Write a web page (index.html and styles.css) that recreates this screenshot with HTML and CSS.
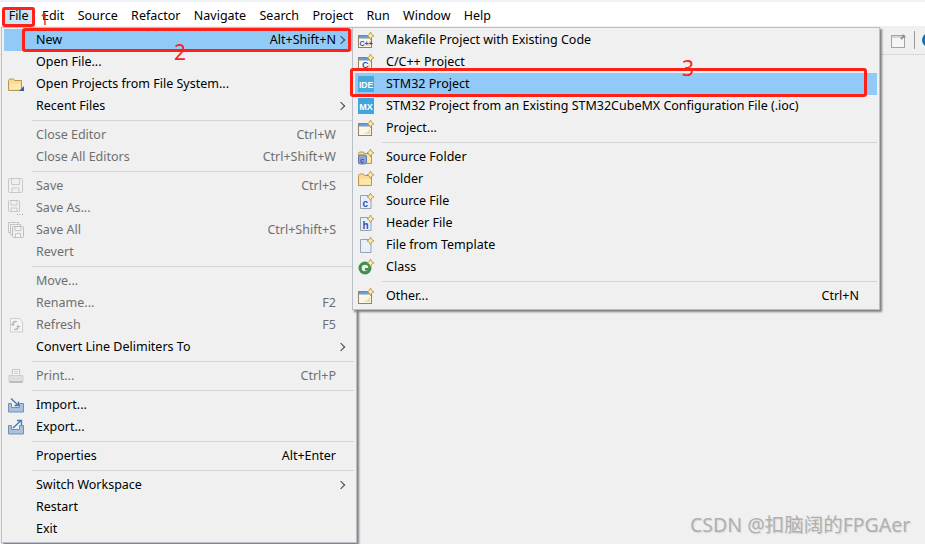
FILE: index.html
```html
<!DOCTYPE html>
<html lang="en">
<head>
  <meta charset="UTF-8" />
  <title>STM32CubeIDE - File menu</title>
  <link rel="stylesheet" href="styles.css">
</head>
<body>

<svg class="defs" width="0" height="0" aria-hidden="true">
  <symbol id="star" viewBox="0 0 16 16">
    <path d="M12.500 0l1.200 2.600 2.300 1.200-2.300 1.300-1.200 2.600-1.200-2.600L9 3.800l2.300-1.200z" fill="#fdeeb0" stroke="#b58f3a" stroke-width=".8"/>
  </symbol>
  <symbol id="win" viewBox="0 0 16 16">
    <rect x=".5" y="3.500" width="13" height="12" fill="#fbf7e6" stroke="#8d8468"/>
    <rect x="1" y="4" width="12" height="2.500" fill="#6f9bd6"/>
    <path d="M3 14q6 0 9-6v6z" fill="#f3dc98"/>
    <use href="#star"/>
  </symbol>
  <symbol id="folder" viewBox="0 0 16 16">
    <path d="M.5 14.500v-10l1-1.500h4l1 1.500h7v10z" fill="#fbd98d" stroke="#b89550"/>
    <path d="M1.500 13.500v-6h11.500v6z" fill="#fde7ad"/>
  </symbol>
  <symbol id="page" viewBox="0 0 16 16">
    <path d="M2.500 2.500h8l2.500 2.500v10.500h-10.500z" fill="#e8effa" stroke="#97a0ae"/>
    <use href="#star"/>
  </symbol>
  <symbol id="disk" viewBox="0 0 16 16">
    <rect x=".5" y=".5" width="14" height="14" rx="1" fill="#f0f0f0" stroke="#c6c6c6"/>
    <path d="M3.500 1v5.500h8v-5.500M4 10h7v4.500h-7z" fill="none" stroke="#cacaca"/>
  </symbol>
</svg>

<div class="title-strip"></div>

<nav class="menubar">
  <a class="active">File</a>
  <a>Edit</a>
  <a>Source</a>
  <a>Refactor</a>
  <a>Navigate</a>
  <a>Search</a>
  <a>Project</a>
  <a>Run</a>
  <a>Window</a>
  <a>Help</a>
</nav>

<div class="toolbar">
  <svg class="tool" width="16" height="16" viewBox="0 0 16 16">
    <rect x=".5" y="3.500" width="13" height="12" fill="#f6f6f6" stroke="#a4a4a4"/>
    <rect x="1" y="4" width="12" height="2" fill="#d4d4d4"/>
    <path d="M9 6l2-1 1-3 3 3-3 1-1 2z" fill="#8f8f8f"/>
  </svg>
  <span class="tool-sep"></span>
  <span class="tool-round"></span>
</div>

<div class="menu file-menu">
  <div class="row hover"><span class="ico"></span><span class="label">New</span><span class="keys">Alt+Shift+N</span><span class="arrow"></span></div>
  <div class="row"><span class="ico"></span><span class="label">Open File...</span></div>
  <div class="row">
    <span class="ico"><svg width="16" height="16" viewBox="0 0 16 16"><use href="#folder"/><path d="M16 10v5h-5z" fill="#2b62b0"/></svg></span>
    <span class="label">Open Projects from File System...</span>
  </div>
  <div class="row"><span class="ico"></span><span class="label">Recent Files</span><span class="arrow"></span></div>
  <div class="sep"></div>
  <div class="row off"><span class="ico"></span><span class="label">Close Editor</span><span class="keys">Ctrl+W</span></div>
  <div class="row off"><span class="ico"></span><span class="label">Close All Editors</span><span class="keys">Ctrl+Shift+W</span></div>
  <div class="sep"></div>
  <div class="row off"><span class="ico"><svg width="16" height="16"><use href="#disk"/></svg></span><span class="label">Save</span><span class="keys">Ctrl+S</span></div>
  <div class="row off">
    <span class="ico"><svg width="16" height="16" viewBox="0 0 16 16"><rect x=".5" y=".5" width="11" height="11" rx="1" fill="#f0f0f0" stroke="#c6c6c6"/><path d="M3 1v4h6v-4M3 8h6v3.500h-6z" fill="none" stroke="#cacaca"/><path d="M9 14.500h1M11.500 14.500h1M14 14.500h1" stroke="#a8a8a8"/></svg></span>
    <span class="label">Save As...</span>
  </div>
  <div class="row off">
    <span class="ico"><svg width="16" height="16" viewBox="0 0 16 16"><rect x=".5" y=".5" width="10" height="10" fill="#f0f0f0" stroke="#c6c6c6"/><rect x="2.500" y="2.500" width="10" height="10" fill="#f0f0f0" stroke="#c6c6c6"/><rect x="4.500" y="4.500" width="11" height="11" rx="1" fill="#f0f0f0" stroke="#bdbdbd"/><path d="M7 5v3.500h6v-3.500M7.500 11.500h5v4h-5z" fill="none" stroke="#c6c6c6"/></svg></span>
    <span class="label">Save All</span><span class="keys">Ctrl+Shift+S</span>
  </div>
  <div class="row off"><span class="ico"></span><span class="label">Revert</span></div>
  <div class="sep"></div>
  <div class="row off"><span class="ico"></span><span class="label">Move...</span></div>
  <div class="row off"><span class="ico"></span><span class="label">Rename...</span><span class="keys">F2</span></div>
  <div class="row off">
    <span class="ico"><svg width="16" height="16" viewBox="0 0 16 16"><path d="M2.500 1.500h9l3 3v10.500h-12z" fill="#f4f4f4" stroke="#cfcfcf"/><path d="M9 4a3.500 3.500 0 0 0-5 3l-1.500 0 2.500 2 2-2h-1.500a2 2 0 0 1 3-1.500zM6 13a3.500 3.500 0 0 0 5-3h1.500l-2.500-2-2 2h1.500a2 2 0 0 1-3 1.500z" fill="#b4b4b4"/></svg></span>
    <span class="label">Refresh</span><span class="keys">F5</span>
  </div>
  <div class="row"><span class="ico"></span><span class="label">Convert Line Delimiters To</span><span class="arrow"></span></div>
  <div class="sep"></div>
  <div class="row off">
    <span class="ico"><svg width="16" height="16" viewBox="0 0 16 16"><path d="M4.500 1.500h7v6h-7z" fill="#f6f6f6" stroke="#c4c4c4"/><path d="M6 3.500h4M6 5.500h4" stroke="#cfcfcf"/><path d="M1 7.500h14v6h-14z" fill="#dedede" stroke="#cfcfcf"/><path d="M1.500 14h13" stroke="#bdbdbd" stroke-width="2"/></svg></span>
    <span class="label">Print...</span><span class="keys">Ctrl+P</span>
  </div>
  <div class="sep"></div>
  <div class="row">
    <span class="ico"><svg width="16" height="16" viewBox="0 0 16 16"><path d="M.5 6.500h3v4h8v-4h4v8.500h-15z" fill="#a9c0de" stroke="#6f8fb8"/><path d="M3 1.500l7 6.500M10.500 4.500v4h-4" fill="none" stroke="#3f78b5" stroke-width="1.300"/></svg></span>
    <span class="label">Import...</span>
  </div>
  <div class="row">
    <span class="ico"><svg width="16" height="16" viewBox="0 0 16 16"><path d="M.5 6.500h3v4h8v-4h4v8.500h-15z" fill="#a9c0de" stroke="#6f8fb8"/><path d="M5 9l8-7.500M9 1.500h4.500v4.500" fill="none" stroke="#3f78b5" stroke-width="1.300"/></svg></span>
    <span class="label">Export...</span>
  </div>
  <div class="sep"></div>
  <div class="row"><span class="ico"></span><span class="label">Properties</span><span class="keys">Alt+Enter</span></div>
  <div class="sep"></div>
  <div class="row"><span class="ico"></span><span class="label">Switch Workspace</span><span class="arrow"></span></div>
  <div class="row"><span class="ico"></span><span class="label">Restart</span></div>
  <div class="row"><span class="ico"></span><span class="label">Exit</span></div>
</div>

<div class="menu new-menu">
  <div class="row">
    <span class="ico"><svg width="16" height="16" viewBox="0 0 16 16"><use href="#win"/><text class="ico-c" x="1.500" y="13.500" font-size="7">C++</text></svg></span>
    <span class="label">Makefile Project with Existing Code</span>
  </div>
  <div class="row">
    <span class="ico"><svg width="16" height="16" viewBox="0 0 16 16"><use href="#win"/><text class="ico-c" x="4" y="14" font-size="9">C</text></svg></span>
    <span class="label">C/C++ Project</span>
  </div>
  <div class="row hover">
    <span class="ico"><svg width="16" height="16" viewBox="0 0 16 16"><rect width="16" height="16" fill="#4aa9dc"/><text class="ico-t" x="8" y="11.500" font-size="8.500">IDE</text></svg></span>
    <span class="label">STM32 Project</span>
  </div>
  <div class="row">
    <span class="ico"><svg width="16" height="16" viewBox="0 0 16 16"><rect width="16" height="16" fill="#3fa5dd"/><text class="ico-t" x="8" y="11.500" font-size="9">MX</text></svg></span>
    <span class="label">STM32 Project from an Existing STM32CubeMX Configuration File (.ioc)</span>
  </div>
  <div class="row">
    <span class="ico"><svg width="16" height="16"><use href="#win"/></svg></span>
    <span class="label">Project...</span>
  </div>
  <div class="sep"></div>
  <div class="row">
    <span class="ico"><svg width="16" height="16" viewBox="0 0 16 16"><use href="#folder"/><rect x=".5" y="6" width="8" height="9" rx="2" fill="#8ea6cf" stroke="#6479a8"/><text class="ico-c" x="2" y="13.500" font-size="7.500">c</text><use href="#star"/></svg></span>
    <span class="label">Source Folder</span>
  </div>
  <div class="row">
    <span class="ico"><svg width="16" height="16" viewBox="0 0 16 16"><use href="#folder"/><use href="#star"/></svg></span>
    <span class="label">Folder</span>
  </div>
  <div class="row">
    <span class="ico"><svg width="16" height="16" viewBox="0 0 16 16"><use href="#page"/><text class="ico-c" x="4.500" y="13.500" font-size="10">c</text></svg></span>
    <span class="label">Source File</span>
  </div>
  <div class="row">
    <span class="ico"><svg width="16" height="16" viewBox="0 0 16 16"><use href="#page"/><text class="ico-c" x="4.500" y="13.500" font-size="10">h</text></svg></span>
    <span class="label">Header File</span>
  </div>
  <div class="row">
    <span class="ico"><svg width="16" height="16"><use href="#page"/></svg></span>
    <span class="label">File from Template</span>
  </div>
  <div class="row">
    <span class="ico"><svg width="16" height="16" viewBox="0 0 16 16"><circle cx="7" cy="9" r="6.500" fill="#3f8f4e"/><circle cx="7" cy="9" r="3.300" fill="#e8f3e6"/><path d="M7 9h6v2.500h-6z" fill="#3f8f4e"/><use href="#star"/></svg></span>
    <span class="label">Class</span>
  </div>
  <div class="sep"></div>
  <div class="row">
    <span class="ico"><svg width="16" height="16"><use href="#win"/></svg></span>
    <span class="label">Other...</span><span class="keys">Ctrl+N</span>
  </div>
</div>

<div class="mark mark-file"></div>
<div class="mark mark-new"></div>
<div class="mark mark-stm"></div>
<span class="step step-1">1</span>
<span class="step step-2">2</span>
<span class="step step-3">3</span>

<div class="watermark">CSDN @扣脑阔的FPGAer</div>

</body>
</html>
```

FILE: styles.css
```css
body {
  margin: 0;
  height: 544px;
  overflow: hidden;
  background: #f0f0f0;
  font-family: "Noto Sans", "Noto Sans CJK SC", sans-serif;
  font-size: 12.5px;
  color: #000;
}
.defs {
  position: absolute;
}
.title-strip {
  height: 2px;
  background: #eef1f8;
}
.menubar {
  display: flex;
  align-items: center;
  height: 24px;
  padding-left: 2px;
  padding-top: 3px;
  box-sizing: border-box;
  background: #fff;
}
.menubar a {
  padding: 0 6.67px;
  line-height: 17px;
}
.menubar .active {
  background: #cce4f7;
}
.toolbar {
  display: flex;
  align-items: center;
  justify-content: flex-end;
  gap: 7px;
  height: 29px;
  box-sizing: border-box;
  border-bottom: 1px solid #d9d9d9;
  overflow: hidden;
}
.tool-sep {
  width: 1px;
  height: 18px;
  background: #9a9a9a;
}
.tool-round {
  width: 14px;
  height: 14px;
  margin-right: -11px;
  border-radius: 50%;
  background: #0f6fb5;
}

/* popup menus sit over the window */
.menu {
  position: absolute;
  top: 27px;
  box-sizing: border-box;
  padding: 1px 2px;
  background: #f0f0f0;
  border: 1px solid #b9bfc6;
  box-shadow: 2px 2px 2px #808080;
}
.file-menu {
  left: 1px;
  width: 356px;
  height: 516px;
}
.new-menu {
  left: 352px;
  width: 528px;
  height: 283px;
}
.row {
  display: flex;
  align-items: center;
  height: 22px;
  white-space: nowrap;
}
.row.hover {
  background: #91c9f7;
}
.ico {
  display: flex;
  align-items: center;
  width: 31px;
  height: 16px;
  padding-left: 3px;
  box-sizing: border-box;
  flex: none;
}
.file-menu .ico {
  width: 32px;
  padding-left: 4px;
}
.label {
  flex: 1;
  margin-top: -2px;
}
.keys {
  margin-top: -2px;
  margin-right: 18px;
}
.arrow {
  width: 5px;
  height: 5px;
  margin: 0 10px 0 -16px;
  border-top: 1px solid #444;
  border-right: 1px solid #444;
  transform: rotate(45deg);
}
.off {
  color: #6f6f6f;
}
.sep {
  height: 1px;
  margin: 3px 0 3px 28px;
  background: #d4d4d4;
}
.new-menu .sep {
  margin-left: 27px;
}
.ico-c {
  font-family: "Liberation Sans", sans-serif;
  font-weight: bold;
  fill: #2f4fb5;
}
.ico-t {
  font-family: "Liberation Sans", sans-serif;
  font-weight: bold;
  fill: #fff;
  text-anchor: middle;
}

/* red hand-drawn notes on the screenshot */
.mark {
  position: absolute;
  box-sizing: border-box;
  border: 3px solid #ff2018;
  border-radius: 3px;
}
.mark-file {
  left: 2px;
  top: 7px;
  width: 33px;
  height: 20px;
}
.mark-new {
  left: 22px;
  top: 28px;
  width: 329px;
  height: 24px;
}
.mark-stm {
  left: 350px;
  top: 68px;
  width: 517px;
  height: 29px;
}
.step {
  position: absolute;
  color: #ff2018;
  font-size: 21px;
  line-height: 20px;
}
.step-1 {
  left: 40px;
  top: 9px;
  font-size: 16px;
}
.step-2 {
  left: 174px;
  top: 42px;
}
.step-3 {
  left: 682px;
  top: 58px;
}
.watermark {
  position: absolute;
  left: 690px;
  top: 513px;
  color: #b0b0b0;
  font-size: 19.5px;
  line-height: 24px;
  white-space: nowrap;
  text-shadow: 1px 1px 1px #d8d8d8;
}
```
